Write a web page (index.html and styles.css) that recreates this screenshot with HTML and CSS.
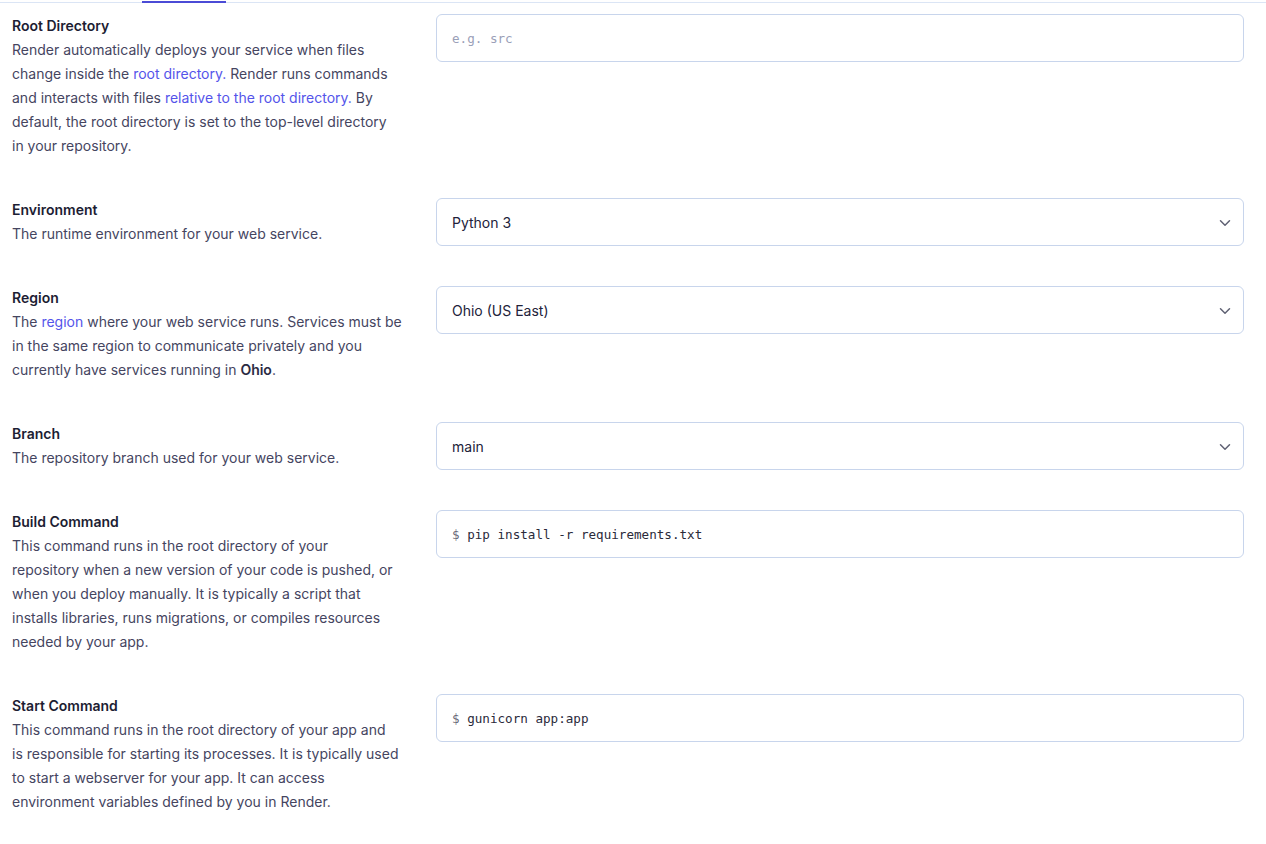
FILE: index.html
```html
<!DOCTYPE html>
<html>
<head>
<meta charset="utf-8">
<link rel="stylesheet" href="styles.css">
</head>
<body>
<div class="tabbar"><div class="tab-indicator"></div></div>
<main class="form">
  <section class="row">
    <div class="info">
      <div class="label">Root Directory</div>
      <p class="desc">Render automatically deploys your service when files<br>change inside the <a href="#">root directory.</a> Render runs commands<br>and interacts with files <a href="#">relative to the root directory.</a> By<br>default, the root directory is set to the top-level directory<br>in your repository.</p>
    </div>
    <div class="field"><div class="input mono placeholder">e.g. src</div></div>
  </section>
  <section class="row">
    <div class="info">
      <div class="label">Environment</div>
      <p class="desc">The runtime environment for your web service.</p>
    </div>
    <div class="field"><div class="input select">Python 3<svg class="chev" width="12" height="8" viewBox="0 0 12 8"><path d="M1.5 1.8 6 6.2 10.5 1.8" fill="none" stroke="#5f6173" stroke-width="1.5" stroke-linecap="round" stroke-linejoin="round"/></svg></div></div>
  </section>
  <section class="row">
    <div class="info">
      <div class="label">Region</div>
      <p class="desc">The <a href="#">region</a> where your web service runs. Services must be<br>in the same region to communicate privately and you<br>currently have services running in <b>Ohio</b>.</p>
    </div>
    <div class="field"><div class="input select">Ohio (US East)<svg class="chev" width="12" height="8" viewBox="0 0 12 8"><path d="M1.5 1.8 6 6.2 10.5 1.8" fill="none" stroke="#5f6173" stroke-width="1.5" stroke-linecap="round" stroke-linejoin="round"/></svg></div></div>
  </section>
  <section class="row">
    <div class="info">
      <div class="label">Branch</div>
      <p class="desc">The repository branch used for your web service.</p>
    </div>
    <div class="field"><div class="input select">main<svg class="chev" width="12" height="8" viewBox="0 0 12 8"><path d="M1.5 1.8 6 6.2 10.5 1.8" fill="none" stroke="#5f6173" stroke-width="1.5" stroke-linecap="round" stroke-linejoin="round"/></svg></div></div>
  </section>
  <section class="row">
    <div class="info">
      <div class="label">Build Command</div>
      <p class="desc">This command runs in the root directory of your<br>repository when a new version of your code is pushed, or<br>when you deploy manually. It is typically a script that<br>installs libraries, runs migrations, or compiles resources<br>needed by your app.</p>
    </div>
    <div class="field"><div class="input mono"><span class="prompt">$</span> pip install -r requirements.txt</div></div>
  </section>
  <section class="row">
    <div class="info">
      <div class="label">Start Command</div>
      <p class="desc">This command runs in the root directory of your app and<br>is responsible for starting its processes. It is typically used<br>to start a webserver for your app. It can access<br>environment variables defined by you in Render.</p>
    </div>
    <div class="field"><div class="input mono"><span class="prompt">$</span> gunicorn app:app</div></div>
  </section>
</main>
</body>
</html>
```

FILE: styles.css
```css
* { box-sizing: border-box; }
html, body { margin: 0; padding: 0; background: #ffffff; }
body {
  font-family: Inter, "Noto Sans", sans-serif;
  font-size: 14px;
  line-height: 24px;
  color: #45455f;
}
.tabbar {
  height: 3px;
  border-bottom: 1px solid #dbe5f5;
  display: flex;
  align-items: flex-end;
}
.tab-indicator {
  margin-left: 142px;
  width: 84px;
  height: 2px;
  background: #4b4bd6;
  margin-bottom: -1px;
}
.form {
  padding: 11px 22px 0 12px;
  display: flex;
  flex-direction: column;
  gap: 40px;
}
.row {
  display: grid;
  grid-template-columns: 394px 1fr;
  column-gap: 30px;
  align-items: start;
}
.label {
  font-weight: 600;
  color: #1d1d33;
}
.desc { margin: 0; }
.desc a { color: #5454ea; text-decoration: none; }
.desc b { font-weight: 600; color: #2b2b44; }
.input {
  height: 48px;
  border: 1px solid #c8d5ec;
  border-radius: 6px;
  padding: 1px 15px 0;
  display: flex;
  align-items: center;
  color: #22223a;
  background: #fff;
}
.mono {
  font-family: "DejaVu Sans Mono", "Liberation Mono", monospace;
  font-size: 12.6px;
  color: #2a2a3a;
  white-space: pre;
}
.placeholder { color: #9aa0b8; padding-top: 2px; }
.prompt { color: #6a6a7a; }
.select { justify-content: space-between; padding-right: 12px; }
.chev { display: block; }
```
